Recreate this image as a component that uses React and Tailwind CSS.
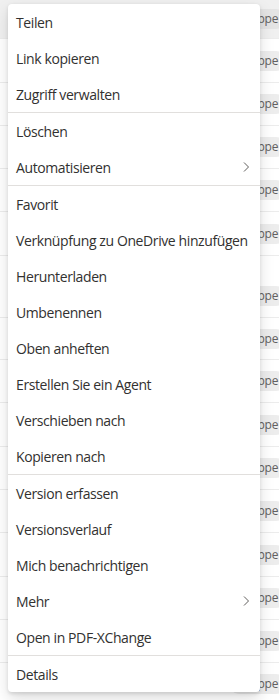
import React from "react";

const FONT = { fontFamily: '"Open Sans", "Noto Sans", Arial, sans-serif' };

// rows of the list behind the menu (height, pill alignment)
const ROWS = [
  { h: "h-[39px]", cls: "bg-[#f0f0f0] items-center", pill: "bg-[#e4e4e4]" },
  { h: "h-[44px]", cls: "items-center" },
  { h: "h-[43px]", cls: "items-center" },
  { h: "h-[43px]", cls: "items-center" },
  { h: "h-[43px]", cls: "items-center" },
  { h: "h-[44px]", cls: "items-center" },
  { h: "h-[62px]", cls: "items-end pb-[11px]" },
  { h: "h-[42px]", cls: "items-center" },
  { h: "h-[43px]", cls: "items-center" },
  { h: "h-[44px]", cls: "items-center" },
  { h: "h-[43px]", cls: "items-center" },
  { h: "h-[43px]", cls: "items-center" },
  { h: "h-[44px]", cls: "items-center" },
  { h: "h-[43px]", cls: "items-center" },
  { h: "h-[43px]", cls: "items-center" },
  { h: "h-[43px]", cls: "items-center" },
];

const GROUPS = [
  [{ label: "Teilen" }, { label: "Link kopieren" }, { label: "Zugriff verwalten" }],
  [{ label: "Löschen" }, { label: "Automatisieren", sub: true }],
  [
    { label: "Favorit" },
    { label: "Verknüpfung zu OneDrive hinzufügen" },
    { label: "Herunterladen" },
    { label: "Umbenennen" },
    { label: "Oben anheften" },
    { label: "Erstellen Sie ein Agent" },
    { label: "Verschieben nach" },
    { label: "Kopieren nach" },
  ],
  [
    { label: "Version erfassen" },
    { label: "Versionsverlauf" },
    { label: "Mich benachrichtigen" },
    { label: "Mehr", sub: true },
    { label: "Open in PDF-XChange" },
  ],
  [{ label: "Details" }],
];

function Chevron() {
  return (
    <svg width="12" height="12" viewBox="0 0 12 12" fill="none">
      <path d="M4 1.5 L8.5 6 L4 10.5" stroke="#605e5c" strokeWidth="1" />
    </svg>
  );
}

export default function App() {
  return (
    <div className="relative w-[279px] h-[700px] overflow-hidden bg-white" style={FONT}>
      {/* list behind */}
      <div className="flex flex-col">
        {ROWS.map((r, i) => (
          <div key={i} className={`flex shrink-0 border-b border-[#ececec] pl-[229px] ${r.h} ${r.cls}`}>
            <span className={`h-[20px] rounded-full px-2 text-[12px] leading-[20px] text-[#616161] whitespace-nowrap tracking-[-0.2px] ${r.pill || "bg-[#ededed]"}`}>
              Gruppe
            </span>
          </div>
        ))}
      </div>

      {/* context menu */}
      <div className="absolute left-[8px] top-[4px] w-[252px] bg-white rounded-[4px] shadow-[0_6.4px_14.4px_rgba(0,0,0,0.13),0_1.2px_3.6px_rgba(0,0,0,0.11)]">
        {GROUPS.map((g, gi) => (
          <div key={gi} className={gi > 0 ? "border-t border-[#e1dfdd]" : ""}>
            {g.map((it) => (
              <div key={it.label} className="flex h-[36px] items-center justify-between pl-2 pr-2 text-[14px] tracking-[-0.4px] text-[#323130] whitespace-nowrap">
                <span>{it.label}</span>
                {it.sub && <Chevron />}
              </div>
            ))}
          </div>
        ))}
      </div>
    </div>
  );
}
